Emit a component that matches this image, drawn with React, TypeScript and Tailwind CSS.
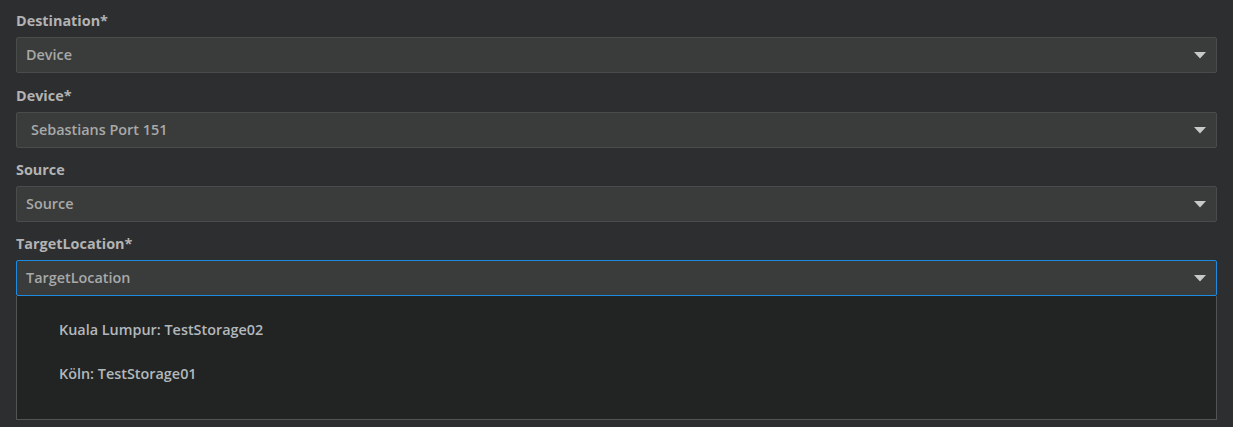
import { useState } from 'react'

interface Field {
  label: string
  value: string
  indent?: boolean
}

const fields: Field[] = [
  { label: 'Destination*', value: 'Device' },
  { label: 'Device*', value: 'Sebastians Port 151', indent: true },
  { label: 'Source', value: 'Source' },
]

const options = ['Kuala Lumpur: TestStorage02', 'Köln: TestStorage01']

function Caret() {
  return (
    <svg width="12" height="7" viewBox="0 0 12 7" className="shrink-0">
      <path d="M0 0 L12 0 L6 6.5 Z" fill="#c9c9c9" />
    </svg>
  )
}

function SelectBox({ value, indent, active }: { value: string; indent?: boolean; active?: boolean }) {
  return (
    <div
      className={
        active
          ? 'h-[36px] flex items-center justify-between rounded-[2px] border border-[#1e8be0] bg-[#3a3c3b] pl-[9px] pr-[10px]'
          : 'h-[36px] flex items-center justify-between rounded-[2px] border border-[#4a4c4b] bg-[#3a3c3b] pl-[9px] pr-[10px]'
      }
    >
      <span className={indent ? 'pl-[5px] text-[14.4px] font-semibold text-[#a8a9a9]' : 'text-[14.4px] font-semibold text-[#a8a9a9]'}>
        {value}
      </span>
      <Caret />
    </div>
  )
}

function Label({ children }: { children: string }) {
  return (
    <div className="h-[21px] pt-[1px] mb-[6px] text-[14.4px] leading-[20px] font-bold text-[#b3b3b3]">{children}</div>
  )
}

export default function App() {
  const [open] = useState(true)

  return (
    <div
      className="min-h-[427px] w-full bg-[#2d2e30] px-4 pt-[10px]"
      style={{ fontFamily: '"Open Sans", "Noto Sans", sans-serif' }}
    >
      {fields.map((f, i) => (
        <div key={f.label} className={i === 0 ? 'mb-[12px]' : 'mb-[11px]'}>
          <Label>{f.label}</Label>
          <SelectBox value={f.value} indent={f.indent} />
        </div>
      ))}
      <div className="relative">
        <Label>TargetLocation*</Label>
        <SelectBox value="TargetLocation" active />
        {open && (
          <div className="absolute left-0 right-0 top-full z-10 h-[124px] border border-t-0 border-[#525453] bg-[#222423] pt-[12px]">
            {options.map(o => (
              <div key={o} className="h-[44px] flex items-center pl-[42px] text-[14.4px] font-semibold text-[#b2b8bd]">
                {o}
              </div>
            ))}
          </div>
        )}
      </div>
    </div>
  )
}
